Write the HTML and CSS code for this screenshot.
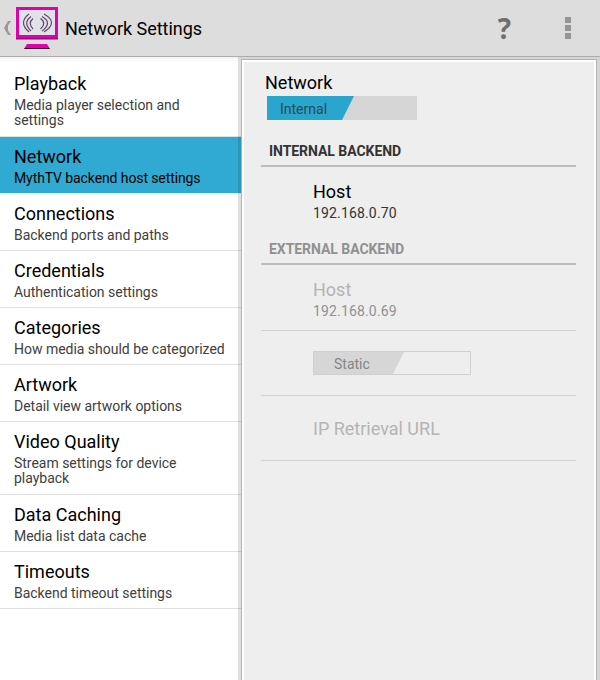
FILE: index.html
```
<!DOCTYPE html>
<html lang="en">
<head>
<meta charset="utf-8">
<title>Network Settings</title>
<link rel="stylesheet" href="styles.css">
</head>
<body>
<header class="bar">
  <svg class="back" width="10" height="18" viewBox="0 0 10 18"><path d="M9 2 6 6.500v5L9 16H6L2 9 6 2z" fill="#989898"/></svg>
  <svg class="logo" width="44" height="44" viewBox="0 0 44 44">
    <path d="M1 1h42v32H1z" fill="#dc00b0"/>
    <path d="M1 32h42v1.500H1z" fill="#9c0880"/>
    <path d="M4 4h36v25H4z" fill="#dfe3e8"/>
    <path d="M12 38h20l3 5H9z" fill="#e000b0"/>
    <path d="M10 42h24l1 1H9z" fill="#400030"/>
    <g fill="none" stroke="#654268" stroke-width="1.2">
      <path d="M14 8Q3 16.500 14 26M16 10.500Q7.500 16.500 16 25M18 12.500Q12.500 17 18 23"/>
      <path d="M29 8Q44 16.500 29 26M27 10.500Q38 16.500 27 25M25.500 12.500Q32 17 25.500 23"/>
    </g>
  </svg>
  <h1>Network Settings</h1>
  <span class="help">?</span>
  <div class="more"><i></i><i></i><i></i></div>
</header>
<main>
  <nav>
    <div class="item tall"><h2>Playback</h2><p>Media player selection and<br>settings</p></div>
    <div class="item active"><h2>Network</h2><p>MythTV backend host settings</p></div>
    <div class="item"><h2>Connections</h2><p>Backend ports and paths</p></div>
    <div class="item"><h2>Credentials</h2><p>Authentication settings</p></div>
    <div class="item"><h2>Categories</h2><p>How media should be categorized</p></div>
    <div class="item"><h2>Artwork</h2><p>Detail view artwork options</p></div>
    <div class="item tall"><h2>Video Quality</h2><p>Stream settings for device<br>playback</p></div>
    <div class="item"><h2>Data Caching</h2><p>Media list data cache</p></div>
    <div class="item"><h2>Timeouts</h2><p>Backend timeout settings</p></div>
  </nav>
  <section class="panel">
    <h2 class="heading">Network</h2>
    <div class="switch on"><span>Internal</span></div>
    <h3 class="first">INTERNAL BACKEND</h3>
    <div class="pref host"><h2>Host</h2><p>192.168.0.70</p></div>
    <div class="disabled">
      <h3>EXTERNAL BACKEND</h3>
      <div class="pref host line"><h2>Host</h2><p>192.168.0.69</p></div>
      <div class="pref toggle line"><div class="switch off"><span>Static</span></div></div>
      <div class="pref url line"><h2>IP Retrieval URL</h2></div>
    </div>
  </section>
</main>
</body>
</html>
```
FILE: styles.css
```
* { box-sizing: border-box; margin: 0; padding: 0; }
body { width: 600px; height: 680px; overflow: hidden; background: #d6d6d6; font-family: Roboto, sans-serif; color: #000; display: flex; flex-direction: column; }
h1, h2 { font-weight: 400; font-size: 18px; }
.bar { height: 57px; flex: none; display: flex; align-items: center; background: #ddd; border-bottom: 1px solid #adadad; }
.back { margin-left: 2px; flex: none; }
.logo { margin-left: 3px; flex: none; margin-bottom: 1px; }
h1 { margin-left: 6px; line-height: 22px; margin-top: 1px; letter-spacing: -.03px; }
.help { margin-left: auto; margin-right: 54px; font: 700 28px/30px "Open Sans", sans-serif; color: #6f6f6f; }
.more { width: 6px; margin-right: 29px; display: flex; flex-direction: column; gap: 2px; }
.more i { height: 6px; background: #959595; }
main { flex: 1; display: flex; min-height: 0; }
nav { width: 241px; flex: none; padding-top: 7px; position: relative; background: linear-gradient(#f4f4f4, #fff 5px); }
nav::after { content: ""; position: absolute; top: 0; right: 0; bottom: 0; width: 3px; background: rgba(0, 0, 0, .12); }
.item { height: 57px; padding: 8px 0 0 14px; border-bottom: 1px solid #e0e0e0; }
.item.tall { height: 73px; }
.item h2 { line-height: 24px; }
.item p { font-size: 14px; line-height: 15px; padding-top: 2px; color: #404040; letter-spacing: -.02px; }
.item.active { background: #31aad3; border-bottom-color: #d6eef6; }
.item.active p { color: #000; letter-spacing: -.1px; }
.panel { flex: 1; margin: 2px 3px 0 0; padding: 11px 20px 0 19px; background: #eee; border: 1px solid #b4b4b4; border-bottom: 0; box-shadow: inset 2px 2px #fff, inset -2px 0 #fff; }
.heading { margin-left: 4px; line-height: 24px; }
.switch { display: flex; height: 24px; font-size: 14px; line-height: 26px; }
.on { margin: 1px 0 0 6px; width: 150px; background: #d5d5d5; color: #294b58; }
.on span { width: 87px; padding-left: 13px; background: #2aa5cd; clip-path: polygon(0 0, 100% 0, 75px 100%, 0 100%); }
h3 { height: 33px; padding: 8px 0 0 8px; border-bottom: 2px solid #bdbdbd; font-size: 14px; line-height: 18px; letter-spacing: -.05px; font-weight: 700; color: #333; }
h3.first { margin-top: 14px; }
.pref { padding-left: 52px; }
.host { height: 65px; padding-top: 13px; }
.host h2 { line-height: 24px; }
.host p { font-size: 14px; line-height: 18px; color: #333; letter-spacing: .16px; }
.disabled h2 { color: #b4b4b4; }
.disabled h3, .disabled p { color: #919191; }
.line { border-bottom: 1px solid #d2d2d2; }
.line.host { height: 66px; }
.toggle { height: 65px; padding-top: 20px; }
.off { width: 158px; border: 1px solid #cfcfcf; color: #858585; line-height: 24px; }
.off span { width: 90px; padding-left: 20px; background: #d6d6d6; clip-path: polygon(0 0, 100% 0, 79px 100%, 0 100%); }
.url { height: 65px; padding-top: 21px; }
.url h2 { line-height: 24px; }
```
